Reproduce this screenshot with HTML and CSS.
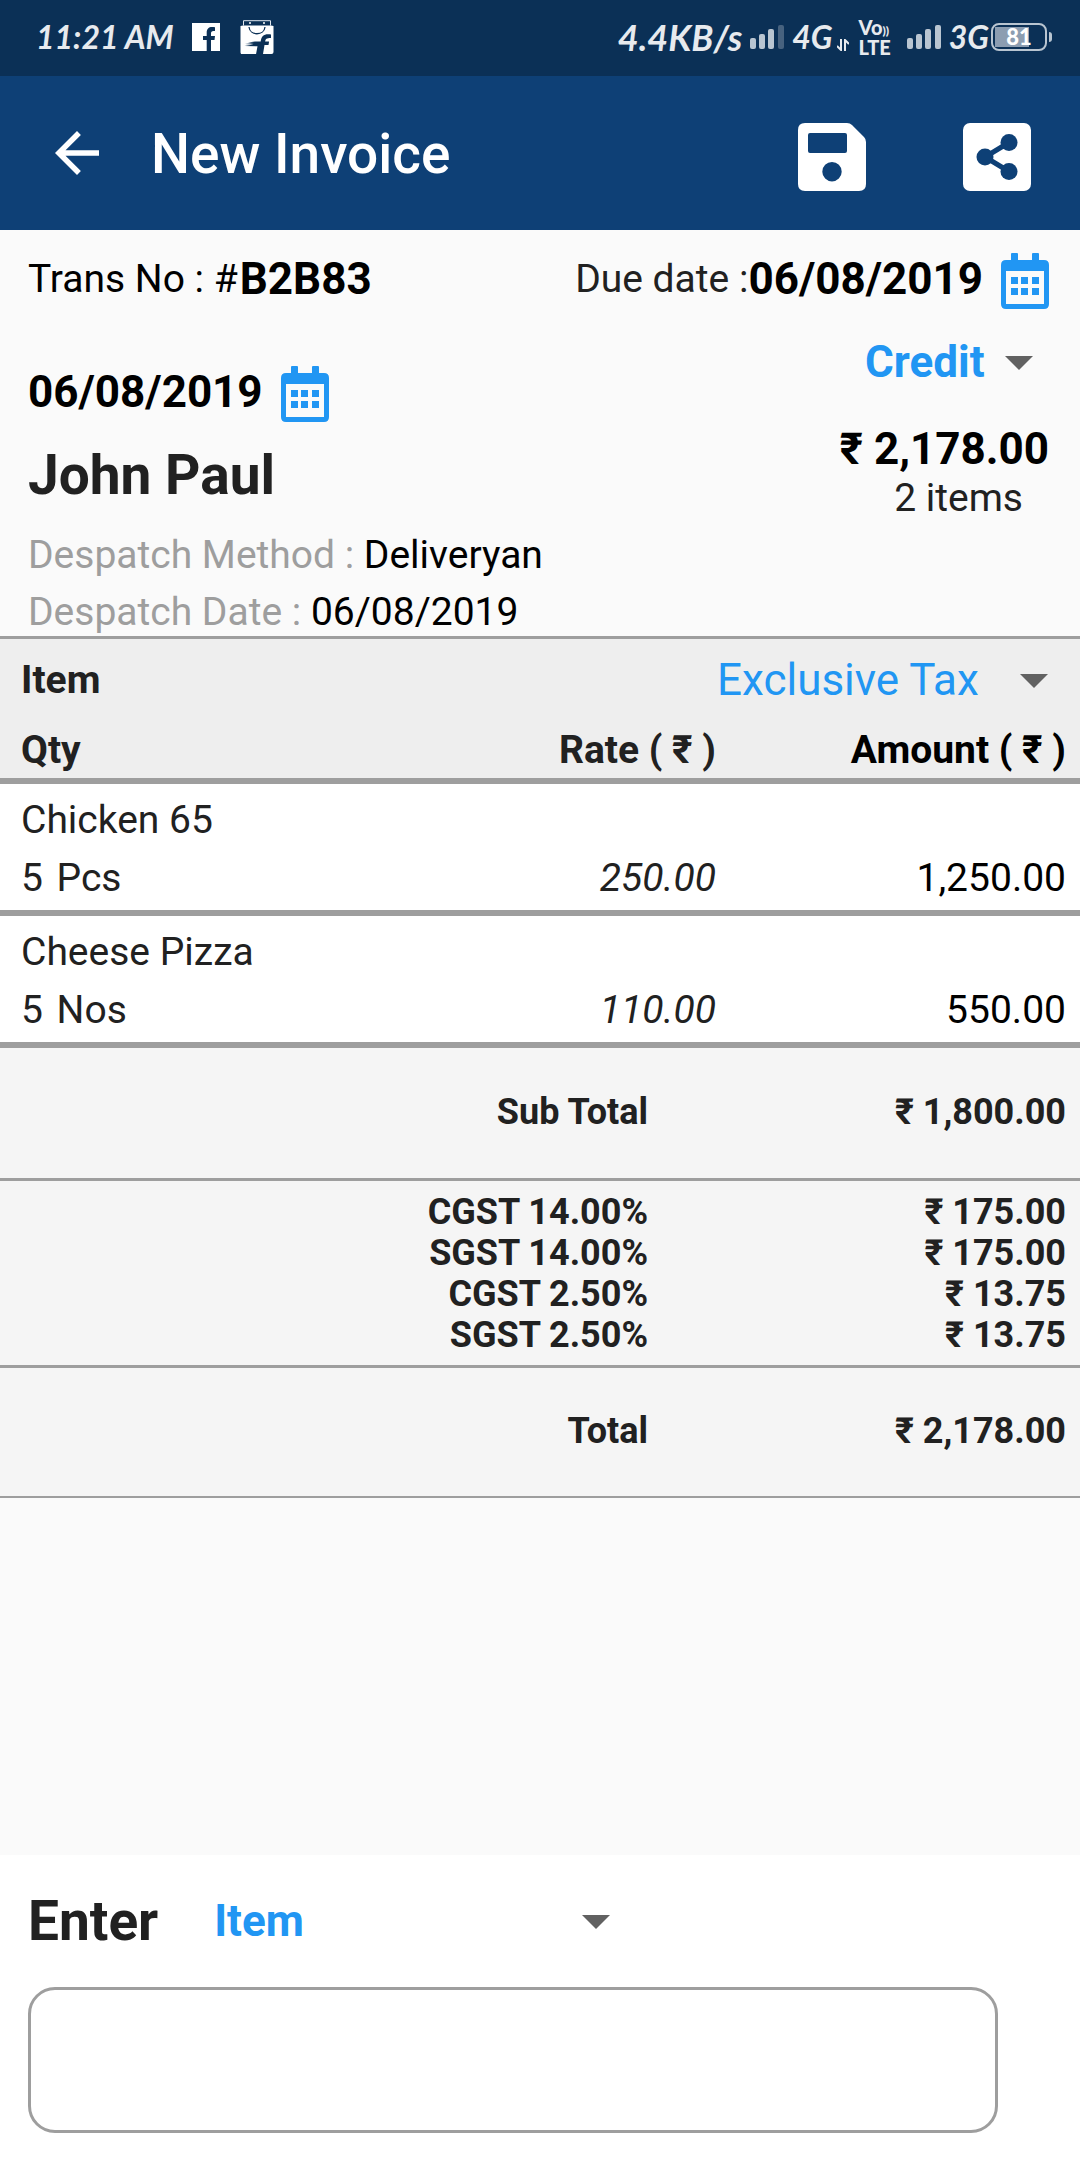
FILE: index.html
```html
<!DOCTYPE html>
<html lang="en">
  <head>
    <meta charset="UTF-8" />
    <meta name="viewport" content="width=device-width, initial-scale=1.0" />
    <title>New Invoice</title>
    <link rel="stylesheet" href="styles.css">
  </head>
  <body>
    <!-- Device status bar -->
    <div class="status-bar">
      <div class="status-left">
        <span class="status-text">11:21 AM</span>
        <svg class="status-fb" viewBox="0 0 28 28" width="28" height="28" aria-hidden="true">
          <path fill="#fff" fill-rule="evenodd" d="M0 0h28v28H19V17h3.500l.5-4H19v-2.500c0-1.500.6-2.500 2.500-2.500H23V4.200C22 4 21 4 20 4c-3.300 0-5.300 2-5.300 5.500V13H11v4h3.700v11H0z" />
        </svg>
        <svg class="status-shop" viewBox="0 0 34 34" width="34" height="34" aria-hidden="true">
          <path fill="#fff" d="M3 5.500h28l2.500.5v26q0 2-2 2H23l1.500-9h4l.6-3.500h-4c.4-2.500 1.400-3.500 5.900-3.500v-3.500c-7-1-9.500 1.500-10.300 7H15l-7 1 6 .5-9 1 8.500.5-9 1.500 13 .3-1.500 8H2.500q-2 0-2-2V6z" />
          <path fill="none" stroke="#dfe6ee" stroke-width="1" d="M3.500 5.500V.7h27v4.800" />
          <path fill="none" stroke="#0b3056" stroke-width="1.300" d="M9 7c1 9 15 9 16 0" />
          <circle cx="10" cy="3" r="1" fill="#fff" />
          <circle cx="24" cy="3" r="1" fill="#fff" />
        </svg>
      </div>
      <div class="status-right">
        <span class="status-text speed">4.4KB/s</span>
        <svg viewBox="0 0 34 24" width="34" height="24" fill="#b9c5d1" aria-hidden="true">
          <rect y="13" width="6" height="11" rx="2" />
          <rect x="9" y="9" width="6" height="15" rx="2" />
          <rect x="18" y="4" width="6" height="20" rx="2" />
          <rect x="28" width="6" height="24" rx="2" fill="#47627f" />
        </svg>
        <span class="status-text network">4G</span>
        <svg class="transfer" viewBox="0 0 12 12" width="12" height="12" fill="none" stroke="#e7eaee" stroke-width="2" aria-hidden="true">
          <path d="M4 0v11L0 7M8 12V1l4 4" />
        </svg>
        <span class="volte"><span>Vo<i>))</i></span><span>LTE</span></span>
        <svg viewBox="0 0 34 24" width="34" height="24" fill="#b9c5d1" aria-hidden="true">
          <rect y="13" width="6" height="11" rx="2" />
          <rect x="9" y="9" width="6" height="15" rx="2" />
          <rect x="18" y="4" width="6" height="20" rx="2" />
          <rect x="28" width="6" height="24" rx="2" />
        </svg>
        <span class="status-text network">3G</span>
        <span class="battery">81</span>
      </div>
    </div>

    <header class="app-bar">
      <button type="button" class="icon-button" aria-label="Back">
        <svg viewBox="0 0 24 24" width="66" height="66" fill="#fff">
          <path d="M20 11H7.830l5.590-5.590L12 4l-8 8 8 8 1.410-1.410L7.830 13H20v-2z" />
        </svg>
      </button>
      <h1>New Invoice</h1>
      <div class="actions">
        <button type="button" class="icon-button" aria-label="Save">
          <svg viewBox="0 0 68 68" width="68" height="68">
            <path fill="#fff" fill-rule="evenodd" d="M7 0h42q3 0 5 2l12 12q2 2 2 5v42q0 7-7 7H7q-7 0-7-7V7Q0 0 7 0zM12 10q-2 0-2 2v16q0 2 2 2h35q2 0 2-2V12q0-2-2-2zM34 39a9.700 9.700 0 1 0 0 19.400 9.700 9.700 0 1 0 0-19.400z" />
          </svg>
        </button>
        <button type="button" class="icon-button" aria-label="Share">
          <svg viewBox="0 0 68 68" width="68" height="68">
            <rect width="68" height="68" rx="7" fill="#fff" />
            <path fill="none" stroke="#0e4076" stroke-width="5" d="M46 19.500L22 34l24 14.500" />
            <g fill="#0e4076">
              <circle cx="46" cy="19.500" r="8.500" />
              <circle cx="22" cy="34" r="8.500" />
              <circle cx="46" cy="48.500" r="8.500" />
            </g>
          </svg>
        </button>
      </div>
    </header>

    <main>
      <!-- Invoice details -->
      <section class="details">
        <div class="trans-row">
          <div class="trans-no"><span>Trans No : #</span><b>B2B83</b></div>
          <div class="due-date">
            <span>Due date :</span><b>06/08/2019</b>
            <button type="button" class="icon-button calendar" aria-label="Change due date">
              <svg viewBox="0 0 48 56" width="48" height="56" fill="#2196f3">
                <path fill-rule="evenodd" d="M10 7V1q0-1 1-1h5q1 0 1 1v6h14V1q0-1 1-1h5q1 0 1 1v6h5q5 0 5 5v39q0 5-5 5H5q-5 0-5-5V12q0-5 5-5zM5 18v33h38V18z" />
                <path d="M10 24h7v7h-7zM20 24h7v7h-7zM31 24h7v7h-7zM10 35h7v7h-7zM20 35h7v7h-7zM31 35h7v7h-7z" />
              </svg>
            </button>
          </div>
        </div>
        <div class="details-body">
          <div class="customer">
            <div class="invoice-date">
              <b>06/08/2019</b>
              <button type="button" class="icon-button calendar" aria-label="Change invoice date">
                <svg viewBox="0 0 48 56" width="48" height="56" fill="#2196f3">
                  <path fill-rule="evenodd" d="M10 7V1q0-1 1-1h5q1 0 1 1v6h14V1q0-1 1-1h5q1 0 1 1v6h5q5 0 5 5v39q0 5-5 5H5q-5 0-5-5V12q0-5 5-5zM5 18v33h38V18z" />
                  <path d="M10 24h7v7h-7zM20 24h7v7h-7zM31 24h7v7h-7zM10 35h7v7h-7zM20 35h7v7h-7zM31 35h7v7h-7z" />
                </svg>
              </button>
            </div>
            <h2>John Paul</h2>
            <p><span>Despatch Method :</span> Deliveryan</p>
            <p><span>Despatch Date :</span> 06/08/2019</p>
          </div>
          <div class="summary">
            <div class="dropdown payment">
              <select aria-label="Payment type">
                <option>Credit</option>
                <option>Cash</option>
              </select>
            </div>
            <b class="amount">₹ 2,178.00</b>
            <span class="count">2 items</span>
          </div>
        </div>
      </section>

      <!-- Items -->
      <table class="items">
        <thead>
          <tr class="item-head">
            <th scope="col">Item</th>
            <th colspan="2">
              <div class="dropdown tax">
                <select aria-label="Tax type">
                  <option>Exclusive Tax</option>
                  <option>Inclusive Tax</option>
                </select>
              </div>
            </th>
          </tr>
          <tr class="qty-head">
            <th scope="col">Qty</th>
            <th scope="col" class="rate">Rate ( ₹ )</th>
            <th scope="col" class="total">Amount ( ₹ )</th>
          </tr>
        </thead>
        <tbody>
          <tr class="item-name"><td colspan="3">Chicken 65</td></tr>
          <tr class="item-line">
            <td>5 <span class="unit">Pcs</span></td>
            <td class="rate">250.00</td>
            <td class="total">1,250.00</td>
          </tr>
        </tbody>
        <tbody>
          <tr class="item-name"><td colspan="3">Cheese Pizza</td></tr>
          <tr class="item-line">
            <td>5 <span class="unit">Nos</span></td>
            <td class="rate">110.00</td>
            <td class="total">550.00</td>
          </tr>
        </tbody>
      </table>

      <!-- Totals -->
      <table class="totals">
        <tbody>
          <tr class="sum"><th scope="row">Sub Total</th><td>₹ 1,800.00</td></tr>
        </tbody>
        <tbody class="taxes">
          <tr><th scope="row">CGST 14.00%</th><td>₹ 175.00</td></tr>
          <tr><th scope="row">SGST 14.00%</th><td>₹ 175.00</td></tr>
          <tr><th scope="row">CGST 2.50%</th><td>₹ 13.75</td></tr>
          <tr><th scope="row">SGST 2.50%</th><td>₹ 13.75</td></tr>
        </tbody>
        <tbody>
          <tr class="sum"><th scope="row">Total</th><td>₹ 2,178.00</td></tr>
        </tbody>
      </table>
    </main>

    <!-- Item entry -->
    <form class="entry">
      <div class="entry-row">
        <label for="entryText">Enter</label>
        <div class="dropdown entry-type">
          <select aria-label="Entry type">
            <option>Item</option>
            <option>Customer</option>
          </select>
        </div>
      </div>
      <input type="text" id="entryText" />
    </form>
  </body>
</html>
```
FILE: styles.css
```css
* {
  box-sizing: border-box;
}

body {
  display: flex;
  flex-direction: column;
  min-height: 100vh;
  margin: 0;
  background: #fafafa;
  font-family: Roboto, "Noto Sans", sans-serif;
  font-size: 39px;
  color: #212121;
}

h1,
h2,
p {
  margin: 0;
}

.icon-button {
  display: flex;
  padding: 0;
  border: none;
  background: none;
  cursor: pointer;
}

/* Status bar */
.status-bar {
  display: flex;
  align-items: center;
  justify-content: space-between;
  height: 76px;
  padding: 0 28px 2px 36px;
  background: #0b3056;
  color: #e7eaee;
}

.status-left,
.status-right {
  display: flex;
  align-items: center;
}

.status-text {
  font-family: Lato, sans-serif;
  font-size: 32px;
  font-style: italic;
  font-weight: bold;
  line-height: 40px;
}

.status-fb {
  margin: 0 20px 0 18px;
}

.speed {
  margin-right: 8px;
  font-size: 36px;
}

.network {
  margin-left: 8px;
}

.transfer {
  align-self: flex-end;
  margin: 0 10px 6px 4px;
}

.volte {
  display: flex;
  flex-direction: column;
  margin-right: 16px;
  font-family: Lato, sans-serif;
  font-size: 20px;
  font-weight: 900;
  line-height: 17px;
}

.volte i {
  font-size: 12px;
  font-style: normal;
}

.battery {
  position: relative;
  width: 56px;
  height: 28px;
  margin: 0 5px 0 2px;
  border: 2px solid #b9c5d1;
  border-radius: 8px;
  background: linear-gradient(90deg, #8c9db1 70%, transparent 70%) 2px 2px / 48px 20px no-repeat;
  font-family: Lato, sans-serif;
  font-size: 22px;
  font-weight: 900;
  line-height: 24px;
  text-align: center;
  color: #fff;
}

.battery::after {
  content: "";
  position: absolute;
  top: 7px;
  right: -7px;
  width: 3px;
  height: 10px;
  border-radius: 0 3px 3px 0;
  background: #b9c5d1;
}

/* App bar */
.app-bar {
  display: flex;
  align-items: center;
  height: 154px;
  padding: 0 49px 0 44px;
  background: #0e4076;
  color: #fff;
}

.app-bar h1 {
  padding-top: 2px;
  margin-left: 41px;
  font-size: 55px;
  font-weight: 500;
}

.app-bar .actions {
  display: flex;
  gap: 97px;
  padding-top: 8px;
  margin-left: auto;
}

/* Details */
.details {
  padding: 23px 31px 0 28px;
  border-bottom: 3px solid #9e9e9e;
}

.details b {
  font-size: 44px;
  color: #000;
}

.trans-row,
.trans-no,
.due-date,
.invoice-date {
  display: flex;
  line-height: 52px;
}

.trans-row,
.details-body {
  justify-content: space-between;
}

.trans-no {
  gap: 2px;
  color: #000;
}

.calendar {
  margin-left: 18px;
}

.details-body {
  display: flex;
  padding-top: 27px;
}

.customer {
  padding-top: 30px;
}

.customer h2 {
  margin: 21px 0 24px;
  font-size: 55px;
  line-height: 64px;
}

.customer p {
  line-height: 48px;
  color: #000;
}

.customer p + p {
  margin-top: 9px;
}

.customer p span {
  color: #9e9e9e;
}

.summary {
  display: flex;
  flex-direction: column;
  align-items: flex-end;
}

.summary .amount {
  margin-top: 35px;
  line-height: 52px;
}

.summary .count {
  margin-right: 26px;
  line-height: 46px;
}

/* Drop-downs */
.dropdown {
  position: relative;
  display: inline-block;
}

.dropdown select {
  display: block;
  width: 100%;
  margin: 0;
  padding: 0 64px 0 0;
  border: none;
  background: none;
  appearance: none;
  font-family: inherit;
  font-size: 44px;
  font-weight: bold;
  line-height: 52px;
  color: #2196f3;
}

.dropdown::after {
  content: "";
  position: absolute;
  top: 20px;
  right: 16px;
  border: 14px solid transparent;
  border-top-color: #616161;
  border-bottom: none;
  pointer-events: none;
}

.dropdown.tax select {
  padding-right: 84px;
  font-weight: normal;
}

/* Items table */
table {
  width: 100%;
  border-collapse: collapse;
  table-layout: fixed;
}

th,
td {
  padding: 0;
  text-align: left;
}

.items thead {
  background: #eee;
}

.items tbody {
  background: #fff;
}

.items thead,
.items tbody {
  border-bottom: 6px solid #9e9e9e;
}

.items th:first-child,
.items td:first-child {
  padding-left: 21px;
}

.items .item-head th {
  height: 82px;
}

.items .item-head th + th {
  padding-right: 16px;
  text-align: right;
}

.items .qty-head th {
  height: 60px;
}

.items .item-name td {
  padding-top: 7px;
  line-height: 58px;
}

.items .item-line td {
  padding-bottom: 3px;
  line-height: 58px;
}

.items .unit {
  margin-left: 4px;
}

.items .rate,
.items .total {
  text-align: right;
}

.items .rate {
  padding-right: 4px;
}

.items td.rate {
  font-style: italic;
}

.items .total {
  padding-right: 14px;
  color: #000;
}

/* Totals */
.totals {
  background: #f5f5f5;
  font-size: 36px;
  font-weight: bold;
}

.totals tbody {
  border-bottom: 3px solid #9e9e9e;
}

.totals tbody:last-child {
  border-bottom-width: 2px;
}

.totals th,
.totals td {
  line-height: 41px;
  text-align: right;
}

.totals th {
  width: 60%;
}

.totals td {
  padding-right: 14px;
}

.totals .sum th,
.totals .sum td {
  height: 131px;
}

.totals .taxes tr:first-child > * {
  padding-top: 11px;
}

.totals .taxes tr:last-child > * {
  padding-bottom: 9px;
}

/* Entry form */
.entry {
  margin-top: auto;
  padding: 34px 82px 27px 28px;
  background: #fff;
}

.entry-row {
  display: flex;
  align-items: center;
  gap: 56px;
}

.entry label {
  font-size: 55px;
  font-weight: bold;
  line-height: 64px;
}

.entry-type {
  flex: 0 0 42%;
}

.entry-type::after {
  right: 12px;
}

.entry input {
  display: block;
  width: 100%;
  height: 146px;
  margin-top: 34px;
  padding: 0 28px;
  border: 3px solid #9e9e9e;
  border-radius: 27px;
  background: #fff;
  font: inherit;
}
```
